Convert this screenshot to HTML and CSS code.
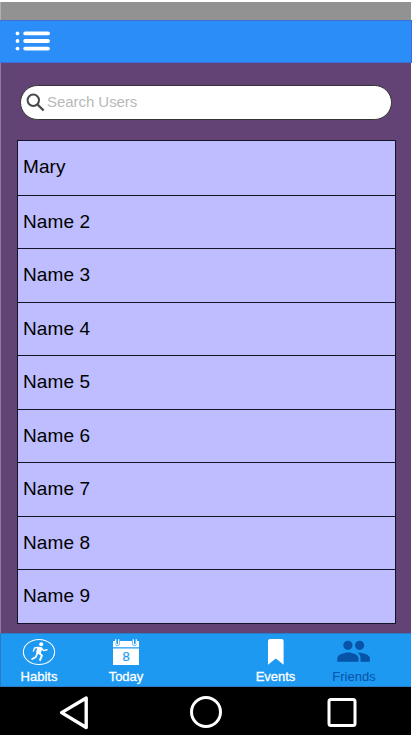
FILE: index.html
```html
<!DOCTYPE html>
<html lang="en">
<head>
<meta charset="utf-8">
<title>Friends</title>
<link rel="stylesheet" href="styles.css">
</head>
<body>
<div class="phone">
  <div class="status"></div>
  <header class="header">
    <svg class="menu" width="36" height="22" viewBox="0 0 36 22">
      <g fill="#fff"><circle cx="2.5" cy="3.4" r="1.9"/><circle cx="2.5" cy="11" r="1.9"/><circle cx="2.5" cy="18.6" r="1.9"/></g>
      <path d="M10.2 3.4H33M10.2 11H33M10.2 18.6H33" stroke="#fff" stroke-width="3.9" stroke-linecap="round"/>
    </svg>
  </header>
  <main class="content">
    <div class="search">
      <svg width="19" height="19" viewBox="0 0 19 19" fill="none" stroke="#484848">
        <circle cx="7.3" cy="7.3" r="5.7" stroke-width="2"/><path d="M11.5 11.5L17.6 17.5" stroke-width="2.4"/>
      </svg>
      <span class="placeholder">Search Users</span>
    </div>
    <ul class="list">
      <li>Mary</li><li>Name 2</li><li>Name 3</li><li>Name 4</li><li>Name 5</li><li>Name 6</li><li>Name 7</li><li>Name 8</li><li>Name 9</li>
    </ul>
  </main>
  <nav class="tabs">
    <div class="tab">
      <svg width="34" height="28" viewBox="0 0 34 28">
        <ellipse cx="17" cy="14" rx="15.6" ry="12.5" fill="none" stroke="#fff" stroke-width="1.1"/>
        <circle cx="19.2" cy="6.3" r="2" fill="#fff"/>
        <path d="M15.8 9.2L20 9.8L18.2 15.4L14.6 14.4Z" fill="#fff" stroke="#fff" stroke-linejoin="round"/>
        <path d="M15.8 9.4L12.6 10L11.4 13M19.6 10.4L21.6 12.6L25 11.8" fill="none" stroke="#fff" stroke-width="1.4" stroke-linecap="round" stroke-linejoin="round"/>
        <path d="M16.6 14.8L20 17.4L18 22M15.4 15L13.8 19L10.2 21" fill="none" stroke="#fff" stroke-width="1.9" stroke-linecap="round" stroke-linejoin="round"/>
      </svg>
      <span>Habits</span>
    </div>
    <div class="tab">
      <svg width="28" height="28" viewBox="0 0 28 28">
        <path d="M1 3H27V9.3H1ZM1 10.5H27V27H1Z" fill="#fff"/>
        <path d="M3.4 1.5V5.5a2 2 0 0 0 4 0V1.5M20.6 1.5V5.5a2 2 0 0 0 4 0V1.5" fill="#1d99f2" stroke="#1d99f2" stroke-width="1"/>
        <path d="M3.7 1.2V5.3a1.5 1.5 0 0 0 3 0V1.2M21.3 1.2V5.3a1.5 1.5 0 0 0 3 0V1.2" fill="none" stroke="#fff" stroke-width="1.3"/>
        <text class="day" x="14" y="22.7" text-anchor="middle">8</text>
      </svg>
      <span>Today</span>
    </div>
    <div class="tab">
      <svg width="18" height="28" viewBox="0 0 18 28"><path d="M3 1H14.6Q16.6 1 16.6 3V26.8L8.8 20.6L1 26.8V3Q1 1 3 1Z" fill="#fff"/></svg>
      <span>Events</span>
    </div>
    <div class="tab active">
      <svg width="34" height="28" viewBox="0 0 34 28" fill="#0653a8">
        <circle cx="10.9" cy="7.3" r="4.6"/><circle cx="22.6" cy="7.3" r="4.6"/>
        <path d="M.3 23.8V20.2C.3 16.8 7.3 14.6 11.2 14.6S21.5 16.8 21.5 20.2V23.8Z"/>
        <path d="M21.6 14.7C26.1 14.5 32.9 16.8 32.9 20.2V23.8H23.5V20.2C23.5 17.8 22.6 16 20.3 14.8Z"/>
      </svg>
      <span>Friends</span>
    </div>
  </nav>
  <footer class="system">
    <svg width="32" height="38" viewBox="0 0 32 38"><path d="M28.2 4V33.5L3.6 18.6Z" fill="none" stroke="#fff" stroke-width="3.4" stroke-linejoin="round"/></svg>
    <svg width="34" height="34" viewBox="0 0 34 34"><circle cx="17" cy="16" r="14.5" fill="none" stroke="#fff" stroke-width="3"/></svg>
    <svg width="30" height="30" viewBox="0 0 30 30"><rect x="2" y="1.5" width="26" height="26" rx="2" fill="none" stroke="#fff" stroke-width="3"/></svg>
  </footer>
</div>
</body>
</html>
```
FILE: styles.css
```css
* { box-sizing: border-box; }
body {
  margin: 0;
  background: #fff;
  font-family: "Liberation Sans", Arial, sans-serif;
}
svg { display: block; flex: none; }
.phone {
  width: 413px;
  height: 735px;
  padding-top: 2px;
  display: flex;
  flex-direction: column;
  overflow: hidden;
}
.status {
  height: 18px;
  width: 411px;
  background: #929292;
  border-left: 1px solid #b0b0b0;
}
.header {
  height: 43px;
  width: 412px;
  background: #2a8df8;
  border: 1px solid #3b70d8;
  border-left: 0;
  padding: 9px 0 0 15px;
}
.content {
  height: 570px;
  width: 411px;
  background: #634276;
  border-left: 1px solid #917aa0;
  padding: 22px 15px 0 16px;
}
.search {
  height: 35px;
  margin: 0 4px 0 3px;
  border: 1px solid #333;
  border-radius: 18px;
  background: #fff;
  display: flex;
  align-items: center;
  padding-left: 5px;
}
.placeholder {
  margin: -2px 0 0 2px;
  font-size: 15px;
  letter-spacing: -.05px;
  color: #b8b8b8;
}
.list {
  list-style: none;
  margin: 20px 0 0;
  padding: 0;
  width: 379px;
  height: 484px;
  display: grid;
  grid-template-rows: repeat(9, 1fr);
  border: 1px solid #151326;
  background: #bebdff;
}
.list li {
  display: flex;
  align-items: center;
  padding: 0 0 .6px 5px;
  font-size: 19px;
  letter-spacing: .1px;
  color: #000;
}
.list li + li { border-top: 1px solid #151326; }
.tabs {
  height: 54px;
  width: 411px;
  background: #1d99f2;
  border: 1px solid #2b7cc4;
  border-width: 1px 0 1px 1px;
  display: grid;
  grid-template-columns: 76px 98px 52px 97px 60px;
  padding-top: 4px;
}
.tab {
  display: flex;
  flex-direction: column;
  align-items: center;
  color: #fff;
  font-size: 13px;
  line-height: 15px;
}
.tab span { margin-top: 3px; -webkit-text-stroke: .3px currentColor; }
.tab:nth-child(2) { grid-column: 2; }
.tab:nth-child(3) { grid-column: 4; }
.tab.active { color: #0653a8; }
.tab.active span { -webkit-text-stroke: 0; }
.day { font-size: 13px; fill: #1d99f2; stroke: #1d99f2; stroke-width: .2px; }
.system {
  height: 48px;
  width: 411px;
  background: #000;
  display: grid;
  grid-template-columns: 131px 138px 30px;
  align-items: center;
  padding: 3px 0 0 58px;
}
```
